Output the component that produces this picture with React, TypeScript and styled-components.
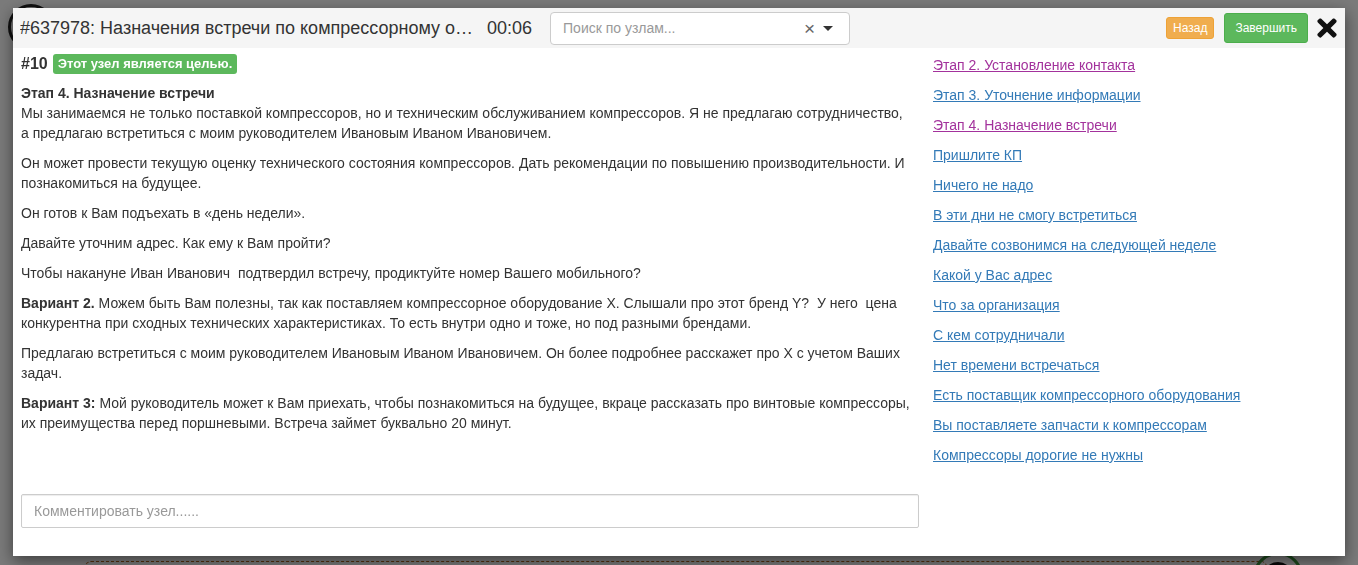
import styled, { createGlobalStyle } from 'styled-components'
import { FaTimes } from 'react-icons/fa'

const GlobalStyle = createGlobalStyle`
	html, body {
		margin: 0;
		padding: 0;
		background: #fff;
		font-family: 'Liberation Sans', Arial, sans-serif;
		overflow: hidden;
	}
`

const stageLinks = [
	{ text: 'Этап 2. Установление контакта', visited: true },
	{ text: 'Этап 3. Уточнение информации', visited: false },
	{ text: 'Этап 4. Назначение встречи', visited: true },
	{ text: 'Пришлите КП', visited: false },
	{ text: 'Ничего не надо', visited: false },
	{ text: 'В эти дни не смогу встретиться', visited: false },
	{ text: 'Давайте созвонимся на следующей неделе', visited: false },
	{ text: 'Какой у Вас адрес', visited: false },
	{ text: 'Что за организация', visited: false },
	{ text: 'С кем сотрудничали', visited: false },
	{ text: 'Нет времени встречаться', visited: false },
	{ text: 'Есть поставщик компрессорного оборудования', visited: false },
	{ text: 'Вы поставляете запчасти к компрессорам', visited: false },
	{ text: 'Компрессоры дорогие не нужны', visited: false },
]

const App = () => {
	return (
		<>
			<GlobalStyle />
			<Canvas>
				{/* nodes of the script tree behind the modal */}
				<RingNode $x={8} $y={4} $size={46} $color="#222" />
				<DashedNode $x={85} $y={561} />
				<RingNode $x={1253} $y={552} $size={50} $color="#3d9a3d">
					<InnerRing />
				</RingNode>
			</Canvas>
			<Backdrop>
				<Modal>
					<Header>
						<Title>#637978: Назначения встречи по компрессорному оборудованию</Title>
						<Timer>00:06</Timer>
						<SearchSelect>
							<Placeholder>Поиск по узлам...</Placeholder>
							<ClearMark>×</ClearMark>
							<Caret />
						</SearchSelect>
						<Spacer />
						<Button $variant="warning" $size="xs">Назад</Button>
						<Button $variant="success" $size="sm">Завершить</Button>
						<CloseButton>
							<FaTimes size={28} />
						</CloseButton>
					</Header>
					<Body>
						<MainColumn>
							<NodeHead>
								<NodeNumber>#10</NodeNumber>
								<GoalLabel>Этот узел является целью.</GoalLabel>
							</NodeHead>
							<Script>
								<p>
									<b>Этап 4. Назначение встречи</b>
									<br />
									Мы занимаемся не только поставкой компрессоров, но и техническим обслуживанием
									компрессоров. Я не предлагаю сотрудничество, а предлагаю встретиться с моим
									руководителем Ивановым Иваном Ивановичем.
								</p>
								<p>
									Он может провести текущую оценку технического состояния компрессоров. Дать
									рекомендации по повышению производительности. И познакомиться на будущее.
								</p>
								<p>Он готов к Вам подъехать в «день недели».</p>
								<p>Давайте уточним адрес. Как ему к Вам пройти?</p>
								<p>
									Чтобы накануне Иван Иванович&nbsp; подтвердил встречу, продиктуйте номер Вашего
									мобильного?
								</p>
								<p>
									<b>Вариант 2.</b> Можем быть Вам полезны, так как поставляем компрессорное
									оборудование X. Слышали про этот бренд Y?&nbsp; У него&nbsp; цена конкурентна при
									сходных технических характеристиках. То есть внутри одно и тоже, но под разными
									брендами.
								</p>
								<p>
									Предлагаю встретиться с моим руководителем Ивановым Иваном Ивановичем. Он более
									подробнее расскажет про X с учетом Ваших задач.
								</p>
								<p>
									<b>Вариант 3:</b> Мой руководитель может к Вам приехать, чтобы познакомиться на
									будущее, вкраце рассказать про винтовые компрессоры, их преимущества перед
									поршневыми. Встреча займет буквально 20 минут.
								</p>
							</Script>
							<CommentInput placeholder="Комментировать узел......" />
						</MainColumn>
						<LinkList>
							{stageLinks.map((link) => (
								<StageLink key={link.text} href="#" $visited={link.visited}>
									{link.text}
								</StageLink>
							))}
						</LinkList>
					</Body>
				</Modal>
			</Backdrop>
		</>
	)
}

export default App

const Canvas = styled.div`
	position: relative;
	width: 1358px;
	height: 565px;
	overflow: hidden;
	background: #fff;
`

const RingNode = styled.div<{ $x: number; $y: number; $size: number; $color: string }>`
	position: absolute;
	left: ${(p) => p.$x}px;
	top: ${(p) => p.$y}px;
	width: ${(p) => p.$size}px;
	height: ${(p) => p.$size}px;
	border: 3px solid ${(p) => p.$color};
	border-radius: 50%;
	box-sizing: border-box;
	display: flex;
	align-items: center;
	justify-content: center;
`

const InnerRing = styled.div`
	width: 30px;
	height: 30px;
	border: 3px solid #111;
	border-radius: 50%;
	box-sizing: border-box;
`

const DashedNode = styled.div<{ $x: number; $y: number }>`
	position: absolute;
	left: ${(p) => p.$x}px;
	top: ${(p) => p.$y}px;
	width: 1180px;
	height: 60px;
	border: 1px dashed #b5651d;
	border-radius: 6px;
`

const Backdrop = styled.div`
	position: fixed;
	inset: 0;
	background: rgba(0, 0, 0, 0.52);
	padding: 8px 13px;
	box-sizing: border-box;
`

const Modal = styled.div`
	width: 1332px;
	height: 548px;
	background: #fff;
	box-shadow: 0 5px 15px rgba(0, 0, 0, 0.5);
	display: flex;
	flex-direction: column;
	color: #333;
	font-size: 14px;
`

const Header = styled.div`
	height: 40px;
	flex-shrink: 0;
	background: #f5f5f5;
	display: flex;
	align-items: center;
	padding: 0 8px 0 7px;
`

const Title = styled.div`
	font-size: 18px;
	color: #333;
	max-width: 456px;
	white-space: nowrap;
	overflow: hidden;
	text-overflow: ellipsis;
`

const Timer = styled.div`
	font-size: 18px;
	color: #333;
	margin-left: 11px;
`

const SearchSelect = styled.div`
	margin-left: 18px;
	width: 300px;
	height: 33px;
	box-sizing: border-box;
	border: 1px solid #ccc;
	border-radius: 4px;
	background: #fff;
	display: flex;
	align-items: center;
	padding: 0 16px 0 12px;
`

const Placeholder = styled.span`
	flex: 1;
	color: #999;
	font-size: 14px;
`

const ClearMark = styled.span`
	color: #666;
	font-size: 19px;
	line-height: 1;
	margin-right: 8px;
`

const Caret = styled.span`
	width: 0;
	height: 0;
	border-left: 5px solid transparent;
	border-right: 5px solid transparent;
	border-top: 5px solid #333;
`

const Spacer = styled.div`
	flex: 1;
`

const Button = styled.button<{ $variant: 'warning' | 'success'; $size: 'xs' | 'sm' }>`
	font-family: inherit;
	font-size: 12px;
	color: #fff;
	border: 1px solid ${(p) => (p.$variant === 'warning' ? '#eea236' : '#4cae4c')};
	background: ${(p) => (p.$variant === 'warning' ? '#f0ad4e' : '#5cb85c')};
	border-radius: 3px;
	cursor: pointer;
	height: ${(p) => (p.$size === 'xs' ? '22px' : '30px')};
	padding: ${(p) => (p.$size === 'xs' ? '0 6px' : '0 10px')};
	margin-left: 10px;
`

const CloseButton = styled.button`
	margin-left: 9px;
	width: 20px;
	height: 28px;
	border: none;
	background: none;
	padding: 0;
	display: flex;
	align-items: center;
	justify-content: center;
	color: #111;
	cursor: pointer;

	svg {
		flex-shrink: 0;
	}
`

const Body = styled.div`
	flex: 1;
	display: grid;
	grid-template-columns: 898px 1fr;
	column-gap: 14px;
	padding: 0 7px 0 8px;
`

const MainColumn = styled.div`
	display: flex;
	flex-direction: column;
	padding-bottom: 28px;
`

const NodeHead = styled.div`
	display: flex;
	align-items: center;
	gap: 5px;
	margin-top: 6px;
	height: 20px;
`

const NodeNumber = styled.span`
	font-size: 16px;
	font-weight: bold;
	color: #333;
`

const GoalLabel = styled.span`
	background: #5cb85c;
	color: #fff;
	font-size: 13px;
	font-weight: bold;
	border-radius: 3px;
	height: 20px;
	line-height: 20px;
	padding: 0 5px;
`

const Script = styled.div`
	margin-top: 9px;
	padding-right: 6px;
	line-height: 20px;

	p {
		margin: 0 0 10px;
	}
`

const CommentInput = styled.input`
	margin-top: auto;
	height: 34px;
	box-sizing: border-box;
	border: 1px solid #ccc;
	border-radius: 2px;
	padding: 0 12px;
	font-family: inherit;
	font-size: 14px;
	color: #333;
	box-shadow: inset 0 1px 1px rgba(0, 0, 0, 0.075);

	&::placeholder {
		color: #999;
	}
`

const LinkList = styled.div`
	display: flex;
	flex-direction: column;
	align-items: flex-start;
	gap: 10px;
	padding-top: 7px;
	line-height: 20px;
`

const StageLink = styled.a<{ $visited: boolean }>`
	color: ${(p) => (p.$visited ? '#a3329c' : '#337ab7')};
	text-decoration: underline;
	font-size: 14px;
`
